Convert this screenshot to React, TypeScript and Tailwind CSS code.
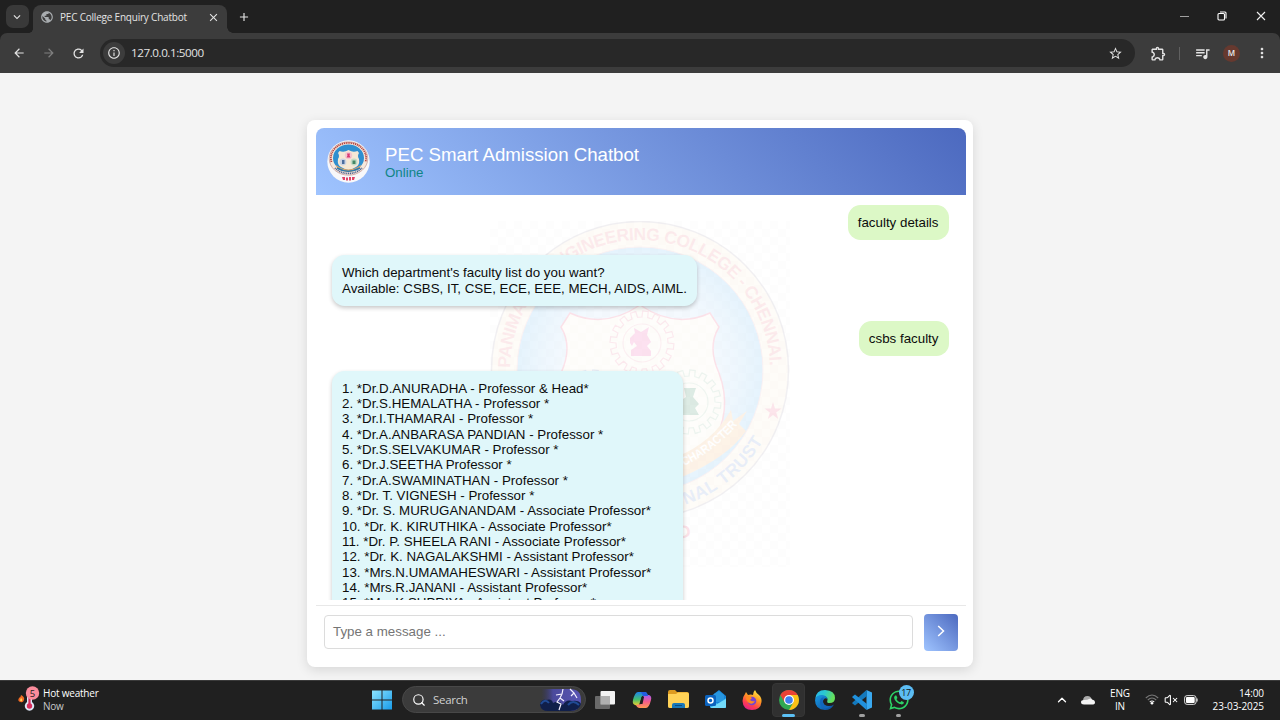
import React from "react";
import {
  MdArrowBack, MdArrowForward, MdRefresh, MdInfoOutline, MdStarBorder,
  MdOutlineExtension, MdQueueMusic, MdMoreVert, MdPublic, MdAdd, MdClose, MdKeyboardArrowDown,
} from "react-icons/md";
import { FaWhatsapp } from "react-icons/fa";
import { VolumeX, Search, ChevronUp } from "lucide-react";

const faculty = [
  "1. *Dr.D.ANURADHA - Professor & Head*",
  "2. *Dr.S.HEMALATHA - Professor *",
  "3. *Dr.I.THAMARAI - Professor *",
  "4. *Dr.A.ANBARASA PANDIAN - Professor *",
  "5. *Dr.S.SELVAKUMAR - Professor *",
  "6. *Dr.J.SEETHA Professor *",
  "7. *Dr.A.SWAMINATHAN - Professor *",
  "8. *Dr. T. VIGNESH - Professor *",
  "9. *Dr. S. MURUGANANDAM - Associate Professor*",
  "10. *Dr. K. KIRUTHIKA - Associate Professor*",
  "11. *Dr. P. SHEELA RANI - Associate Professor*",
  "12. *Dr. K. NAGALAKSHMI - Assistant Professor*",
  "13. *Mrs.N.UMAMAHESWARI - Assistant Professor*",
  "14. *Mrs.R.JANANI - Assistant Professor*",
  "15. *Mrs.K.SUPRIYA - Assistant Professor*",
];

function gearPath(cx: number, cy: number, ro: number, ri: number, teeth: number) {
  const pts: string[] = [];
  const step = (Math.PI * 2) / teeth;
  const offsets: [number, number][] = [[0, ri], [0.06, ro], [0.5, ro], [0.56, ri]];
  for (let i = 0; i < teeth; i++) {
    for (const [f, r] of offsets) {
      const a = (i + f) * step;
      pts.push(`${(cx + r * Math.cos(a)).toFixed(2)} ${(cy + r * Math.sin(a)).toFixed(2)}`);
    }
  }
  return `M${pts.join("L")}Z`;
}

const shieldPath =
  "M80 92Q115 108 150 84Q185 108 220 92L229 106Q217 126 229 152Q243 190 222 224Q196 252 150 262Q104 252 78 224Q57 190 71 152Q83 126 71 106Z";

function Seal() {
  return (
    <svg viewBox="0 0 300 346" className="h-[346px] w-[300px] opacity-[0.150]">
      <defs>
        <path id="seal-top" d="M20 149A130 130 0 0 1 280 149" />
        <path id="seal-bottom" d="M8 149A142 142 0 0 0 292 149" />
        <path id="seal-ribbon" d="M194 245Q224 231 249 202" />
        <radialGradient id="seal-blue">
          <stop offset="0.6" stopColor="#b8dcfc" />
          <stop offset="0.8" stopColor="#90ccf8" />
          <stop offset="1" stopColor="#58b4f4" />
        </radialGradient>
      </defs>
      <circle cx="150" cy="149" r="148.500" fill="#fdeed2" stroke="#a8a0b0" strokeWidth="1.500" />
      <circle cx="150" cy="149" r="123" fill="url(#seal-blue)" stroke="#e8b0b8" strokeWidth="1" />
      <path d={shieldPath} fill="#fdf8e8" stroke="#f04878" strokeWidth="1.500" />
      <g fill="none" strokeWidth="1.200">
        <path d={gearPath(152, 122, 32, 26, 16)} stroke="#f07898" />
        <circle cx="152" cy="122" r="19" stroke="#f0a0b0" />
        <path d={gearPath(199, 181, 32, 26, 16)} stroke="#90c0a0" />
        <circle cx="199" cy="181" r="19" stroke="#a0c8a8" />
        <path d={gearPath(102, 181, 32, 26, 16)} stroke="#80a0d8" />
      </g>
      <path d="M144 107l7 4 8-5-2 8 4 7-4 4 4 5v5h-20v-6l6-4-3-4-2 4-2-3v-5l5-5Z" fill="#f040a0" />
      <path d="M194 167h12l-3 9 6 7-4 4 4 7h-21l5-8-3-6 6-4Z" fill="#208050" />
      <path d="M186 236Q222 222 241 189L243 200L257 190L249 203L256 210Q238 236 192 256Q170 264 150 266V250Q170 246 186 236Z" fill="#f8b468" />
      <text className="font-['Liberation_Sans'] font-bold" fontSize="12" fill="#fff">
        <textPath href="#seal-ribbon" startOffset="0" textLength="68" lengthAdjust="spacingAndGlyphs">CHARACTER</textPath>
      </text>
      <text className="font-['Liberation_Sans'] font-bold" fontSize="17.500" fill="#f08088">
        <textPath href="#seal-top" startOffset="2" textLength="402">PANIMALAR ENGINEERING COLLEGE - CHENNAI.</textPath>
      </text>
      <text className="font-['Liberation_Sans'] font-bold" fontSize="17.500" fill="#7094d8">
        <textPath href="#seal-bottom" startOffset="269" textLength="103">NAL TRUST</textPath>
      </text>
      <path d="M283 181l2 6.500 6.500 0-5.300 4 2 6.500-5.200-4-5.200 4 2-6.500-5.300-4 6.500 0Z" fill="#f05880" />
      <text transform="translate(189 318) rotate(-12)" className="font-['Liberation_Sans'] font-bold" fontSize="18" fill="#f04870">D</text>
    </svg>
  );
}

function Logo() {
  return (
    <svg viewBox="0 0 43 43" className="h-[43px] w-[43px]">
      <circle cx="21.500" cy="21.500" r="21.200" fill="#f8f8fa" />
      <ellipse cx="21.500" cy="18.500" rx="19.300" ry="16.700" fill="#f6e8dc" stroke="#c9a09c" strokeWidth=".8" />
      <path d="M4.500 22A17.600 15.200 0 1 1 38.500 22" fill="none" stroke="#b5423f" strokeWidth="1.800" strokeDasharray="1.200 .7" />
      <path d="M8 28A17.600 15.200 0 0 0 35 28" fill="none" stroke="#4d628f" strokeWidth="1.700" strokeDasharray="1.100 .7" />
      <ellipse cx="21.500" cy="18" rx="15.500" ry="13.500" fill="#2f8fd0" />
      <path d="M12.500 11Q17 13 21.500 10Q26 13 30.500 11L32 13Q30 16 32 19Q33 25 29 27Q25 29.500 21.500 30Q18 29.500 14 27Q10 25 11 19Q13 16 11 13Z" fill="#f5e8d5" />
      <circle cx="21.500" cy="15.500" r="3.700" fill="#f3c8d0" />
      <path d="M20 13.500h3l-.5 2 1 2h-4l1-2Z" fill="#d83873" />
      <circle cx="16" cy="22" r="3.400" fill="#cbd3e4" />
      <path d="M15 20h2.500v4H15Z" fill="#4b6d9e" />
      <circle cx="27" cy="22" r="3.400" fill="#c2dbc6" />
      <path d="M25.500 20.500h3v3.500h-3Z" fill="#448765" />
      <path d="M9 25Q21 34 34 25L33 28Q21 36 10 28Z" fill="#e3a35f" />
      <path d="M10 28Q21 34.500 33 28" fill="none" stroke="#2c7bb0" strokeWidth="1.500" />
      <path d="M15 37h3v3h-2zM19 37.500h2v3h-2zM22 37h2v3.500h-2zM25 37h3l-1 3h-2z" fill="#e04468" />
    </svg>
  );
}

function BrowserChrome() {
  return (
    <header className="h-[73px] shrink-0 bg-[#202020] font-['Open_Sans',sans-serif] text-[#e3e3e3]">
      <div className="flex h-[33px] items-start">
        <div className="ml-[5.500px] mt-[5px] flex h-[23px] w-[23.500px] items-center justify-center rounded-[7px] bg-[#393939]">
          <MdKeyboardArrowDown className="size-[14px]" />
        </div>
        <div className="mt-[5px] flex h-7 w-[4px] shrink-0 items-end overflow-hidden">
          <div className="h-[4px] w-[4px] bg-[radial-gradient(circle_at_0_0,#202020_3.500px,#3c3c3c_4px)]" />
        </div>
        <div className="mt-[5px] flex h-7 w-[194px] items-center rounded-t-[8px] bg-[#3c3c3c] pb-1 pl-[7px] pr-[7px]">
          <MdPublic className="size-[14px] text-[#a9adb0]" />
          <span className="ml-[6px] whitespace-nowrap text-[10px] tracking-[-0.210px]">PEC College Enquiry Chatbot</span>
          <MdClose className="ml-auto size-[13px]" />
        </div>
        <div className="mt-[5px] flex h-7 w-[6px] items-end">
          <div className="h-[6px] w-[6px] bg-[radial-gradient(circle_at_100%_0,#202020_5.500px,#3c3c3c_6px)]" />
        </div>
        <MdAdd className="ml-[4px] mt-[10px] size-[14px]" />
        <div className="ml-auto mr-[14px] mt-[11px] flex items-center">
          <div className="h-px w-[9px] bg-[#a0a0a0]" />
          <svg viewBox="0 0 10 10" className="ml-[28px] size-[10px]" fill="none" stroke="#fff" strokeWidth="1.1">
            <rect x="1" y="2.500" width="6.500" height="6.500" rx="1" />
            <path d="M3 1H8Q9 1 9 2V7.500" />
          </svg>
          <svg viewBox="0 0 10 10" className="ml-[29px] size-[10px]" stroke="#f0f0f0" strokeWidth="1.100">
            <path d="M1 1L9 9M9 1L1 9" />
          </svg>
        </div>
      </div>
      <div className="flex h-10 items-center rounded-t-[7px] bg-[#3c3c3c]">
        <MdArrowBack className="ml-[11.500px] size-[14px]" />
        <MdArrowForward className="ml-[16px] size-[14px] text-[#808080]" />
        <MdRefresh className="ml-[15px] size-[15px]" />
        <div className="ml-[14.500px] flex h-[28px] w-[1035px] items-center rounded-full bg-[#282828] pl-[3px] pr-[12px]">
          <div className="flex size-[22px] items-center justify-center rounded-full bg-[#3c3c3c]">
            <MdInfoOutline className="size-[14px]" />
          </div>
          <span className="ml-[6px] text-[11.670px] tracking-[-0.440px]">127.0.0.1:5000</span>
          <MdStarBorder className="ml-auto size-[15px]" />
        </div>
        <MdOutlineExtension className="ml-[15px] size-[17px]" />
        <div className="ml-[12px] h-[13px] w-px bg-[#606060]" />
        <MdQueueMusic className="ml-[14px] size-[17px]" />
        <div className="ml-[12px] flex size-[17px] items-center justify-center rounded-full bg-[#66392f] text-[8px] font-semibold text-[#eee]">M</div>
        <MdMoreVert className="ml-[14px] size-[16px]" />
      </div>
    </header>
  );
}

function ChatCard() {
  return (
    <div className="flex h-[547px] w-[666.670px] flex-col rounded-[8px] bg-white pl-[8.830px] pr-[7.830px] pt-[8px] font-['Liberation_Sans',Arial,sans-serif] text-[13.333px] leading-[15.333px] text-[#0c0c0c] shadow-[0_3px_12px_rgba(0,0,0,0.120)]">
      <div className="flex h-[67px] shrink-0 items-center rounded-t-[8px] bg-[linear-gradient(45deg,#9fc4ff,#4c69bf)] pl-[11.500px]">
        <Logo />
        <div className="ml-[15px] pt-[1px]">
          <h1 className="text-[18.670px] leading-[21px] text-white">PEC Smart Admission Chatbot</h1>
          <p className="text-[#0f8585]">Online</p>
        </div>
      </div>
      <div className="relative h-[405px] shrink-0 overflow-hidden">
        <div className="absolute left-[174.500px] top-[25.500px] h-[346px] w-[300px] bg-[repeating-conic-gradient(#fdfdfd_0_25%,#fff_0_50%)] bg-[length:16px_16px]">
          <Seal />
        </div>
        <div className="relative flex flex-col gap-[15px] pl-[16.500px] pr-[17px] pt-[10px]">
          <div className="self-end rounded-[12.500px] bg-[#dcf8c6] p-[10px]">faculty details</div>
          <div className="self-start rounded-[12.500px] bg-[#e0f7fa] p-[10px] shadow-[0_2px_4px_rgba(0,0,0,0.220)]">
            Which department's faculty list do you want?<br />
            Available: CSBS, IT, CSE, ECE, EEE, MECH, AIDS, AIML.
          </div>
          <div className="self-end rounded-[12.500px] bg-[#dcf8c6] p-[10px]">csbs faculty</div>
          <div className="w-[351px] self-start rounded-t-[12.500px] bg-[#e0f7fa] px-[10px] pt-[9.500px] shadow-[0_2px_4px_rgba(0,0,0,0.220)]">
            {faculty.map((line) => (
              <div key={line} className="whitespace-nowrap">{line}</div>
            ))}
          </div>
        </div>
      </div>
      <div className="mt-[5px] flex items-center border-t border-[#e8e8e8] pl-[8px] pt-[7.500px]">
        <div className="flex h-[34px] w-[589px] items-center rounded-[4px] border border-[#dcdcdc] pb-[1px] pl-[8.500px] text-[#757575]">Type a message ...</div>
        <div className="ml-[11px] flex h-[37px] w-[34px] items-center justify-center rounded-[4px] bg-[linear-gradient(45deg,#9fc4ff,#4c69bf)]">
          <svg viewBox="0 0 8 12" className="mb-[3px] h-[12px] w-[8px]" fill="none" stroke="#fff" strokeWidth="1.500">
            <path d="M1.200 1L6.500 6L1.200 11" />
          </svg>
        </div>
      </div>
    </div>
  );
}

function Cell({ children, active, running }: { children: React.ReactNode; active?: boolean; running?: boolean }) {
  return (
    <div className="relative flex h-[34px] w-[36.670px] items-center justify-center">
      {active && <div className="absolute inset-x-[2px] inset-y-0 rounded-[4px] border border-[#363636] bg-[#303030]" />}
      <div className="relative">{children}</div>
      {active && <div className="absolute bottom-0 h-[2.500px] w-[13px] rounded-full bg-[#5cc0f4]" />}
      {running && <div className="absolute bottom-0 h-[2.500px] w-[5.500px] rounded-full bg-[#a0a0a0]" />}
    </div>
  );
}

function Taskbar() {
  return (
    <footer className="flex h-10 shrink-0 items-center border-t border-[#3a3a3a] bg-[#202020] pb-[2px] font-['Open_Sans',sans-serif] text-[10px] leading-[13px] text-white">
      <div className="flex w-[371px] items-center pl-[17px]">
        <svg viewBox="0 0 24 26" className="mb-[2px] h-[26px] w-[24px]">
          <path d="M4 9Q8 11 7 14Q6 17 3.500 16Q0 15 2 12Q4 11 4 9Z" fill="#f06a22" />
          <path d="M4 12Q6 13 5 15Q3.500 16 3 14Z" fill="#ffd15c" />
          <path d="M10 8a2.500 2.500 0 0 1 5 0v8a4.700 4.700 0 1 1-5 0Z" fill="#dfe7f7" />
          <path d="M12.500 10v8" stroke="#d82d5b" strokeWidth="2.200" />
          <circle cx="12.500" cy="20" r="2.700" fill="#d82d5b" />
          <circle cx="15.500" cy="7" r="6.700" fill="#fa8c9c" />
          <text x="15.500" y="10.500" fontSize="9.500" textAnchor="middle" fill="#222">5</text>
        </svg>
        <div className="ml-[2px] tracking-[-0.210px]">
          <div>Hot weather</div>
          <div className="text-[#c8c8c8]">Now</div>
        </div>
      </div>
      <svg viewBox="0 0 20 20" className="ml-[0.500px] h-[20px] w-[20px]">
        <defs><linearGradient id="win" x1="0" y1="0" x2="1" y2="1"><stop stopColor="#8de4ff" /><stop offset="1" stopColor="#189be8" /></linearGradient></defs>
        <path d="M0 .5h9.500v9H0ZM10.500.5H20v9h-9.500ZM0 10.500h9.500v9H0ZM10.500 10.500H20v9h-9.500Z" fill="url(#win)" />
      </svg>
      <div className="ml-[10px] flex h-[27px] w-[184px] items-center rounded-full border border-[#484848] bg-[#3b3b3b] pl-[9px] pr-[3px]">
        <Search className="size-[14px]" strokeWidth={2} />
        <span className="ml-[7.500px] text-[11.500px] tracking-[-0.300px] text-[#d0d0d0]">Search</span>
        <svg viewBox="0 0 42 24" className="ml-auto h-[24px] w-[42px]">
          <defs><linearGradient id="storm" x1="0" y1="0" x2="1" y2="0"><stop stopColor="#34366a" stopOpacity="0" /><stop offset=".3" stopColor="#4b4a9c" /><stop offset="1" stopColor="#5954b4" /></linearGradient></defs>
          <path d="M2 1H30Q41 1 41 12T30 23H8Q1 23 1 18Z" fill="url(#storm)" />
          <path d="M0 17Q1 11 6 12Q12 10 13 15Q19 11 23 17Q26 11 32 13Q39 12 41 16Q39 23 30 23H8Q1 23 0 17Z" fill="#101f4a" />
          <path d="M1 16Q5 10 9 15M28 17Q33 11 39 17" stroke="#204a94" strokeWidth="2" fill="none" />
          <path d="M23 1L22 6L16 7M22 6L20 10L17 14L21 16L19 22M20 10L24 13M30 1L34 5L31 8M34 5L37 10" fill="none" stroke="#f4f0ff" strokeWidth="1.200" />
        </svg>
      </div>
      <div className="ml-[1.500px] flex">
        <Cell>
          <svg viewBox="0 0 20 18" className="h-[18px] w-[20px]">
            <rect x="5.500" y="0" width="14.500" height="13.500" rx="1" fill="#f3f3f3" />
            <rect x="0" y="5" width="15" height="13" rx="1" fill="#777" fillOpacity=".85" />
            <rect x="5.500" y="5" width="9.500" height="8.500" fill="#b0b0b0" />
          </svg>
        </Cell>
        <Cell>
          <svg viewBox="0 0 20 18" className="h-[18px] w-[20px]">
            <defs>
              <linearGradient id="cpa" x1="0" y1="0" x2="0" y2="1"><stop stopColor="#1c82ed" /><stop offset=".55" stopColor="#44c06e" /><stop offset="1" stopColor="#f2cf2d" /></linearGradient>
              <linearGradient id="cpb" x1="0" y1="0" x2="0" y2="1"><stop stopColor="#a65cf2" /><stop offset=".5" stopColor="#f45c8c" /><stop offset="1" stopColor="#ff9a52" /></linearGradient>
            </defs>
            <path d="M6 1H13Q15 1 16 5L10 5L7 14Q6 15 3 14Q0 13 1 9Q3 1 6 1Z" fill="url(#cpa)" />
            <path d="M14 17H7Q5 17 4 14L9 13L12 4Q14 4 17 4Q20 5 19 9Q17 17 14 17Z" fill="url(#cpb)" />
            <path d="M9 1H13Q15 1 16 5L11 5Z" fill="#235ee0" />
            <path d="M9.500 6L12 6L10.500 13L8 13Z" fill="#202020" />
          </svg>
        </Cell>
        <Cell>
          <svg viewBox="0 0 21 19" className="h-[19px] w-[21px]">
            <path d="M0 2Q0 0 2 0H7L9 2H19Q21 2 21 4V9H0Z" fill="#dd9b20" />
            <path d="M0 4H8L10 2.500H19Q21 2.500 21 4.500V16.500Q21 18 19 18H2Q0 18 0 16.500Z" fill="#ffd257" />
            <path d="M4 18V15Q4 13 6 13H15Q17 13 17 15V18Z" fill="#1978b8" />
            <path d="M7 15.500H14" stroke="#0b4c80" strokeWidth="1" />
          </svg>
        </Cell>
        <Cell>
          <svg viewBox="0 0 21 19" className="h-[19px] w-[21px]">
            <path d="M5 7L14 0L21 6V17Q21 18 19 18H7Q5 18 5 16Z" fill="#1684d8" />
            <path d="M9 4L14 1L19 5V12H9Z" fill="#2796e0" />
            <path d="M5 9L13 14L21 8V17Q21 18 19 18H7Q5 18 5 16Z" fill="#37b4ef" />
            <path d="M5 18L21 9V17Q21 18 19 18Z" fill="#72dafa" />
            <rect x="0" y="5" width="11" height="11" rx="1.500" fill="#0b62bd" />
            <circle cx="5.500" cy="10.500" r="2.500" fill="none" stroke="#fff" strokeWidth="1.500" />
          </svg>
        </Cell>
        <Cell>
          <svg viewBox="0 0 20 20" className="h-[20px] w-[20px]">
            <defs><linearGradient id="fox" x1=".8" y1="0" x2=".3" y2="1"><stop stopColor="#fff24c" /><stop offset=".4" stopColor="#ff9a22" /><stop offset=".75" stopColor="#ff3d50" /><stop offset="1" stopColor="#e21f8c" /></linearGradient></defs>
            <path d="M3 4L4 2L6 5Q9 4 11 5Q11 2 13 0Q14 3 17 5Q20 8 19.500 12Q18.500 20 10 20Q1 20 .5 11Q.5 7 3 4Z" fill="url(#fox)" />
            <circle cx="10" cy="11" r="4.300" fill="#7745d0" />
            <path d="M4 7Q7 5 10 8L8 10Q10 12 13 11Q11 15 7 13Q4 11 4 7Z" fill="#ff8a20" />
          </svg>
        </Cell>
        <Cell active>
          <svg viewBox="0 0 20 20" className="h-[20px] w-[20px]">
            <circle cx="10" cy="10" r="10" fill="#30a853" />
            <path d="M10 10L1.340 5A10 10 0 0 1 18.660 5Z" fill="#e94235" />
            <path d="M10 5H18.660A10 10 0 0 1 10 20L14.330 12.500Z" fill="#fbc116" />
            <path d="M1.340 5L5.670 12.500L10 5Z" fill="#e94235" />
            <circle cx="10" cy="10" r="5" fill="#fff" />
            <circle cx="10" cy="10" r="3.800" fill="#3f7ff0" />
          </svg>
        </Cell>
        <Cell>
          <svg viewBox="0 0 20 20" className="h-[20px] w-[20px]">
            <defs>
              <linearGradient id="ea" x1="0" y1="0" x2="1" y2=".3"><stop stopColor="#28b4ee" /><stop offset=".5" stopColor="#2bc8d0" /><stop offset="1" stopColor="#66e05a" /></linearGradient>
              <linearGradient id="eb" x1="0" y1="0" x2="1" y2="1"><stop stopColor="#189be4" /><stop offset="1" stopColor="#0d4a9c" /></linearGradient>
            </defs>
            <path d="M.2 9Q1 0 10 0Q20 .5 20 8Q20 13 14.500 13Q11.500 13 12.300 11Q13.500 7 9 6Q3 5 .2 9Z" fill="url(#ea)" />
            <path d="M0 10Q1 5 7 5Q12 5.500 12.500 9Q9 7 8 11Q8 16 14 16Q17 16 19 14.500Q16 20 10 20Q0 19.500 0 10Z" fill="url(#eb)" />
            <path d="M5 12Q5 7 9 7.500Q7 10 8 13Q10 17 16 16Q12 19 9 18Q5 17 5 12Z" fill="#1267be" />
          </svg>
        </Cell>
        <Cell running>
          <svg viewBox="0 0 20 20" className="h-[20px] w-[20px]">
            <path d="M14.500 0L20 2.500V17.500L14.500 20L14.500 15V5Z" fill="#3aa9f0" />
            <path d="M14.500 0L15 6L3 15.500L.5 13.500Q0 13 .5 12.500Z" fill="#1479bd" />
            <path d="M14.500 20L15 14L3 4.500L.5 6.500Q0 7 .5 7.500Z" fill="#2090dc" />
          </svg>
        </Cell>
        <Cell running>
          <FaWhatsapp className="size-[22px] text-[#2cd466]" />
          <div className="absolute -top-[4px] left-[11px] flex size-[15px] items-center justify-center rounded-full bg-[#5cbdf3] text-[9px] tracking-[-0.300px] text-[#111]">17</div>
        </Cell>
      </div>
      <div className="ml-auto flex items-center pr-[16px]">
        <ChevronUp className="size-[14px]" strokeWidth={2.200} />
        <svg viewBox="0 0 14 10" className="ml-[12px] h-[10px] w-[14px]">
          <path d="M2 6Q2 1 6.500 1Q10 1 11 5Z" fill="#aaa" />
          <path d="M3 9.500Q0 9.500 0 7Q0 5 3 5Q7 5 8 4Q10 3 11 4.500Q14 5 14 7.500Q14 9.500 11 9.500Z" fill="#f4f4f4" />
        </svg>
        <div className="ml-[13px] w-[24px] text-center tracking-[-0.200px]">ENG<br />IN</div>
        <svg viewBox="0 0 14 11" className="ml-[13px] h-[11px] w-[14px]" fill="none" strokeWidth="1.100">
          <path d="M.8 4Q7-2 13.200 4M2.800 6Q7 2 11.200 6" stroke="#777" />
          <path d="M4.800 8Q7 6 9.200 8" stroke="#eee" />
          <circle cx="7" cy="9.300" r="1.300" fill="#fff" />
        </svg>
        <VolumeX className="ml-[5px] size-[14px]" strokeWidth={1.800} />
        <svg viewBox="0 0 14 10" className="ml-[6px] h-[10px] w-[14px]">
          <rect x=".6" y=".6" width="11.500" height="8.800" rx="2.500" fill="none" stroke="#ddd" strokeWidth="1" />
          <rect x="2" y="2" width="8.700" height="6" rx="1" fill="#fff" />
          <path d="M13 3.500v3" stroke="#ddd" strokeWidth="1.300" />
        </svg>
        <div className="ml-[13px] w-[53px] whitespace-nowrap text-right tracking-[-0.080px]">14:00<br />23-03-2025</div>
      </div>
    </footer>
  );
}

export default function App() {
  return (
    <div className="flex h-[720px] w-[1280px] flex-col overflow-hidden">
      <BrowserChrome />
      <main className="flex min-h-0 flex-1 justify-center bg-[#f4f4f4] pt-[47px]">
        <ChatCard />
      </main>
      <Taskbar />
    </div>
  );
}
